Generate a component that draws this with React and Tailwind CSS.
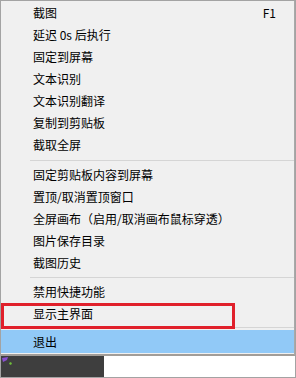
import React from "react";

const groups = [
  [
    { t: "截图", k: "F1" },
    { t: "延迟 0s 后执行" },
    { t: "固定到屏幕" },
    { t: "文本识别" },
    { t: "文本识别翻译" },
    { t: "复制到剪贴板" },
    { t: "截取全屏" },
  ],
  [
    { t: "固定剪贴板内容到屏幕" },
    { t: "置顶/取消置顶窗口" },
    { t: "全屏画布（启用/取消画布鼠标穿透）" },
    { t: "图片保存目录" },
    { t: "截图历史" },
  ],
  [{ t: "禁用快捷功能" }, { t: "显示主界面" }],
];

function Row({ t, k }) {
  return (
    <div className="h-[22px] flex items-center justify-between pl-[32px] pr-[18px] text-[12px] leading-none text-black">
      <span>{t}</span>
      {k && <span>{k}</span>}
    </div>
  );
}

export default function App() {
  return (
    <div
      className="w-[296px] h-[378px] bg-white border border-[#a3a3a3] flex flex-col overflow-hidden"
      style={{ fontFamily: '"Noto Sans CJK SC", "Microsoft YaHei", sans-serif' }}
    >
      <div className="relative bg-[#f0f0f0] border-r border-[#a9a9a9] border-b-2 border-b-[#a29d98] pt-[1px] pb-[1px]">
        {groups[0].map((r) => (
          <Row key={r.t} {...r} />
        ))}
        <div className="h-[8px] pt-[4px] pl-[29px]">
          <div className="h-px bg-[#d5d5d5]" />
        </div>
        {groups[1].map((r) => (
          <Row key={r.t} {...r} />
        ))}
        <div className="h-[7px] pt-[3px] pl-[29px]">
          <div className="h-px bg-[#d5d5d5]" />
        </div>
        {groups[2].map((r) => (
          <Row key={r.t} {...r} />
        ))}
        <div className="h-[5px] pt-[2px] pl-[29px]">
          <div className="h-px bg-[#d5d5d5]" />
        </div>
        <div className="h-[23px] flex items-center pl-[32px] bg-[#91c9f7] text-[12px] leading-none text-black">
          退出
        </div>
        <div className="absolute left-0 top-[302px] w-[234px] h-[26px] border-[3px] border-[#e0202b]" />
      </div>
      <div className="flex-1 flex">
        <div className="w-[103px] bg-[#3e3e3e] pt-[1px] pl-[1px]">
          <svg width="12" height="9" viewBox="0 0 12 9">
            <path d="M0 1 L6 0 L5 3 L1 5 Z" fill="#8a4fd0" />
            <path d="M7 6 L9 5 L10 7 L8 8 Z" fill="#6fbf3a" />
          </svg>
        </div>
        <div className="flex-1 bg-white" />
      </div>
    </div>
  );
}
